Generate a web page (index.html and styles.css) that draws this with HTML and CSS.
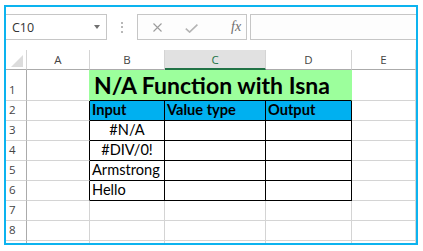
FILE: index.html
```html
<!DOCTYPE html>
<html lang="en">
<head>
    <meta charset="UTF-8">
    <title>N/A Function with Isna</title>
    <link rel="stylesheet" href="styles.css">
</head>
<body>
    <div class="frame">
        <div class="bar">
            <div class="name-box">
                <span class="name">C10</span>
                <span class="caret"></span>
            </div>
            <div class="grip"><i></i><i></i><i></i></div>
            <div class="fx-box">
                <svg class="cancel" width="9" height="9" viewBox="0 0 9 9"><path d="M0.5 0.5L8.5 8.5M8.5 0.5L0.5 8.5" stroke="#9c9c9c" stroke-width="1.1" fill="none"/></svg>
                <svg class="enter" width="13" height="9" viewBox="0 0 13 9"><path d="M0.8 4.6L4.6 8.1L12.4 0.7" stroke="#b4b4b4" stroke-width="1.6" fill="none"/></svg>
                <span class="fx">fx</span>
            </div>
            <div class="formula"></div>
        </div>

        <div class="sheet">
            <!-- column headers -->
            <div class="corner"><span class="tri"></span></div>
            <div class="ch">A</div>
            <div class="ch">B</div>
            <div class="ch sel">C</div>
            <div class="ch">D</div>
            <div class="ch">E</div>

            <!-- row 1 -->
            <div class="rh">1</div>
            <div class="cell fill-edge"></div>
            <div class="cell title">N/A Function with Isna</div>
            <div class="cell"></div>

            <!-- row 2 -->
            <div class="rh">2</div>
            <div class="cell edge"></div>
            <div class="cell tb head">Input</div>
            <div class="cell tb head">Value type</div>
            <div class="cell tb head">Output</div>
            <div class="cell"></div>

            <!-- rows 3-6 -->
            <div class="rh">3</div>
            <div class="cell edge"></div>
            <div class="cell tb center">#N/A</div>
            <div class="cell tb"></div>
            <div class="cell tb"></div>
            <div class="cell"></div>

            <div class="rh">4</div>
            <div class="cell edge"></div>
            <div class="cell tb center">#DIV/0!</div>
            <div class="cell tb"></div>
            <div class="cell tb"></div>
            <div class="cell"></div>

            <div class="rh">5</div>
            <div class="cell edge"></div>
            <div class="cell tb">Armstrong</div>
            <div class="cell tb"></div>
            <div class="cell tb"></div>
            <div class="cell"></div>

            <div class="rh">6</div>
            <div class="cell edge"></div>
            <div class="cell tb">Hello</div>
            <div class="cell tb"></div>
            <div class="cell tb"></div>
            <div class="cell"></div>

            <!-- empty rows -->
            <div class="rh">7</div>
            <div class="cell"></div>
            <div class="cell"></div>
            <div class="cell"></div>
            <div class="cell"></div>
            <div class="cell"></div>

            <div class="rh">8</div>
            <div class="cell"></div>
            <div class="cell"></div>
            <div class="cell"></div>
            <div class="cell"></div>
            <div class="cell"></div>

            <!-- row 9 only shows its gridlines -->
            <div class="rh"></div>
            <div class="cell"></div>
            <div class="cell"></div>
            <div class="cell"></div>
            <div class="cell"></div>
            <div class="cell"></div>
        </div>
    </div>
</body>
</html>
```

FILE: styles.css
```css
* {
    box-sizing: border-box;
}
body {
    margin: 0;
    background-color: #ffffff;
    font-family: "Open Sans", sans-serif;
}
.frame {
    width: 414px;
    height: 240px;
    margin: 5px 0 0 4px;
    border: 2px solid #0cb3ef;
    overflow: hidden;
}

/* formula bar */
.bar {
    display: flex;
    margin-top: 7px;
    height: 26px;
}
.name-box {
    width: 101px;
    display: flex;
    align-items: center;
    border: 1px solid #c6c6c6;
    border-left: none;
    background-color: #ffffff;
}
.name {
    margin-left: 6px;
    font-size: 12.5px;
    color: #333;
}
.caret {
    margin-left: auto;
    margin-right: 6px;
    border-top: 4px solid #707070;
    border-left: 3.5px solid transparent;
    border-right: 3.5px solid transparent;
}
.grip {
    width: 30px;
    display: flex;
    flex-direction: column;
    align-items: center;
    justify-content: center;
    gap: 2.5px;
}
.grip i {
    width: 2px;
    height: 2px;
    background-color: #b8b8b8;
}
.fx-box {
    width: 110px;
    display: flex;
    align-items: center;
    border: 1px solid #c6c6c6;
    background-color: #fdfdfd;
}
.cancel {
    margin-left: 15px;
}
.enter {
    margin-left: 23px;
    margin-top: 2px;
}
.fx {
    margin-left: 33px;
    font-family: "Liberation Serif", serif;
    font-style: italic;
    font-size: 14px;
    color: #6e6e6e;
}
.formula {
    flex: 1;
    margin-left: 3px;
    border: 1px solid #c6c6c6;
    border-right: none;
    background-color: #fdfdfd;
}

/* sheet grid */
.sheet {
    display: grid;
    grid-template-columns: 21px 63px 75px 101px 86px 64px;
    grid-template-rows: 20px 31px repeat(8, 20px);
    height: 193px;
    margin-top: 10px;
    overflow: hidden;
}
.corner {
    display: flex;
    justify-content: flex-end;
    align-items: flex-end;
    padding: 0 3px 2px 0;
    border-right: 1px solid #d4d4d4;
    border-bottom: 1px solid #ababab;
}
.tri {
    border-left: 12px solid transparent;
    border-bottom: 12px solid #dcdcdc;
}
.ch {
    display: flex;
    justify-content: center;
    align-items: center;
    font-size: 11.5px;
    color: #444;
    border-right: 1px solid #d4d4d4;
    border-bottom: 1px solid #ababab;
}
.ch.sel {
    background-color: #e1e1e1;
    color: #217346;
    border-bottom: 2px solid #217346;
}
.rh {
    display: flex;
    align-items: flex-end;
    padding: 0 0 3px 3px;
    font-size: 11.5px;
    line-height: 14px;
    color: #444;
    border-right: 1px solid #ababab;
    border-bottom: 1px solid #d4d4d4;
}
.cell {
    display: flex;
    align-items: flex-end;
    padding: 0 2px 1px;
    font-family: Lato, "Open Sans", sans-serif;
    font-size: 14.6px;
    line-height: 18px;
    color: #000;
    white-space: nowrap;
    overflow: hidden;
    border-right: 1px solid #d4d4d4;
    border-bottom: 1px solid #d4d4d4;
}
.cell.edge {
    border-right-color: #000;
}
.cell.fill-edge {
    border-right-color: #9cff9c;
}
.cell.title {
    grid-column: span 3;
    background-color: #9cff9c;
    border-right-color: #9cff9c;
    border-bottom-color: #000;
    padding: 0 4px 2px;
    font-weight: bold;
    font-size: 23px;
    line-height: 26px;
}
.cell.tb {
    border-right-color: #000;
    border-bottom-color: #000;
}
.cell.head {
    background-color: #00b0f0;
    font-weight: bold;
}
.cell.center {
    justify-content: center;
}
```
